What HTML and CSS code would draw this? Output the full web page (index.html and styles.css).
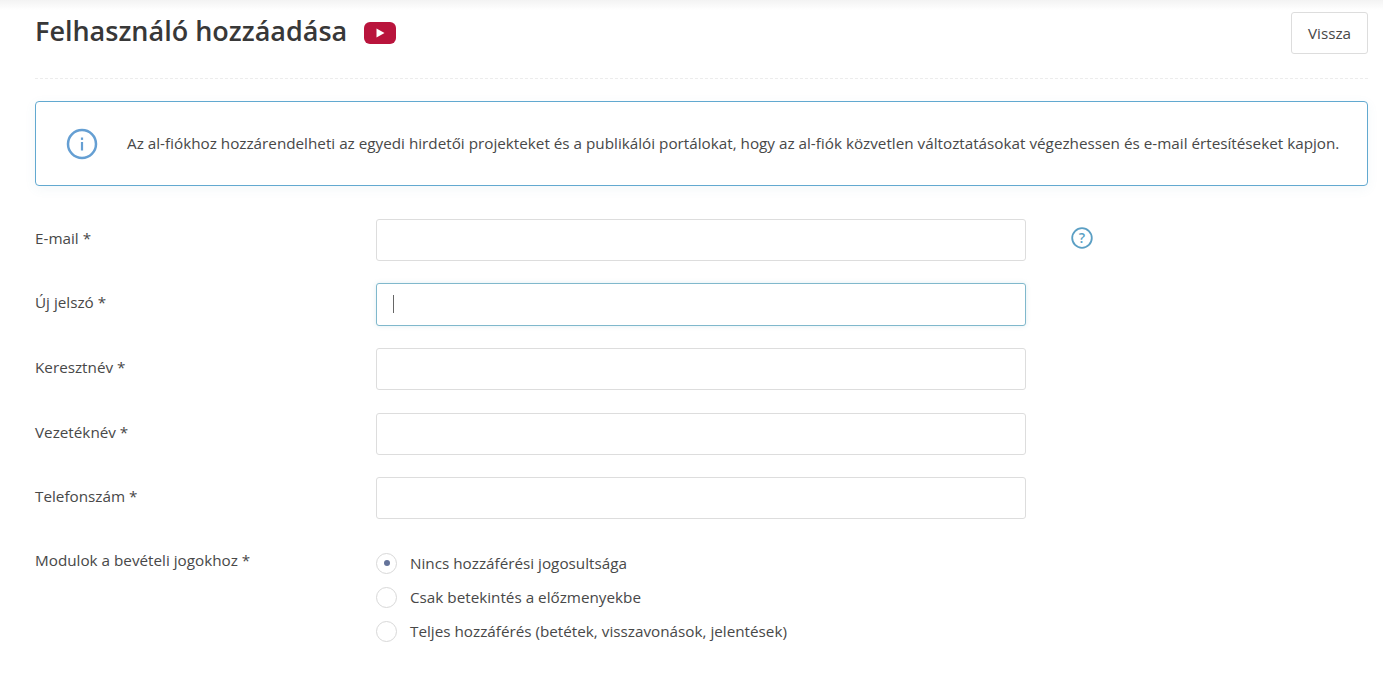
FILE: index.html
```html
<!DOCTYPE html>
<html lang="en">

<head>
    <meta charset="UTF-8" />
    <meta name="viewport" content="width=device-width, initial-scale=1.0" />
    <title>Felhasználó hozzáadása</title>
    <link rel="stylesheet" href="styles.css">
</head>

<body>
    <div class="page">
        <div class="header">
            <div class="title">
                <h1>Felhasználó hozzáadása</h1>
                <svg class="video-icon" width="32" height="22" viewBox="0 0 32 22">
                    <rect width="32" height="22" rx="6" fill="#b9143c" />
                    <path d="M12.5 6.5 L20.5 11 L12.5 15.5 Z" fill="#fff" />
                </svg>
            </div>
            <button class="back">Vissza</button>
        </div>

        <div class="notice">
            <svg class="notice-icon" width="32" height="32" viewBox="0 0 32 32">
                <circle cx="16" cy="16" r="14" fill="none" stroke="#659fd3" stroke-width="2.5" />
                <rect x="14.9" y="14" width="2.2" height="8.5" fill="#659fd3" />
                <rect x="14.9" y="9.5" width="2.2" height="2.4" fill="#659fd3" />
            </svg>
            <p>Az al-fiókhoz hozzárendelheti az egyedi hirdetői projekteket és a publikálói portálokat, hogy az al-fiók közvetlen változtatásokat végezhessen és e-mail értesítéseket kapjon.</p>
        </div>

        <form class="form">
            <div class="row">
                <label>E-mail *</label>
                <input type="text" />
                <svg class="help" width="22" height="22" viewBox="0 0 22 22">
                    <circle cx="11" cy="11" r="9.8" fill="none" stroke="#5b9fc4" stroke-width="1.8" />
                    <text x="11" y="16" text-anchor="middle" class="help-mark">?</text>
                </svg>
            </div>
            <div class="row">
                <label>Új jelszó *</label>
                <div class="input focused"><span class="caret"></span></div>
            </div>
            <div class="row">
                <label>Keresztnév *</label>
                <input type="text" />
            </div>
            <div class="row">
                <label>Vezetéknév *</label>
                <input type="text" />
            </div>
            <div class="row">
                <label>Telefonszám *</label>
                <input type="text" />
            </div>
            <div class="row radios-row">
                <label>Modulok a bevételi jogokhoz *</label>
                <div class="radios">
                    <div class="radio-item"><span class="radio checked"></span>Nincs hozzáférési jogosultsága</div>
                    <div class="radio-item"><span class="radio"></span>Csak betekintés a előzmenyekbe</div>
                    <div class="radio-item"><span class="radio"></span>Teljes hozzáférés (betétek, visszavonások, jelentések)</div>
                </div>
            </div>
        </form>
    </div>
</body>

</html>
```

FILE: styles.css
```css
* {
    box-sizing: border-box;
}

body {
    margin: 0;
    height: 673px;
    overflow: hidden;
    background: #fff;
    color: #484848;
    font-family: "Open Sans", sans-serif;
    font-size: 15.25px;
}

.page {
    padding: 12px 15px 0 35px;
    background: linear-gradient(to bottom, #f3f3f3, #fff 10px);
}

.header {
    display: flex;
    justify-content: space-between;
    align-items: flex-start;
    height: 67px;
    border-bottom: 1px dashed #ececec;
}

.title {
    display: flex;
    align-items: center;
    height: 38px;
}

h1 {
    margin: 0;
    margin-top: -1px;
    font-size: 27px;
    font-weight: 600;
    color: #383838;
}

.video-icon {
    margin-left: 17px;
    margin-top: 3px;
}

.back {
    width: 77px;
    height: 42px;
    border: 1px solid #ddd;
    border-radius: 3px;
    background: #fff;
    color: #484848;
    font-family: inherit;
    font-size: 15.25px;
}

.notice {
    display: flex;
    align-items: center;
    height: 85px;
    margin-top: 22px;
    padding-left: 30px;
    border: 1px solid #62a9d0;
    border-radius: 4px;
    box-shadow: 0 3px 12px rgba(90, 140, 170, 0.07);
}

.notice p {
    margin: -2px 0 0 29px;
    white-space: nowrap;
}

.form {
    margin-top: 32.98px;
}

.row {
    display: flex;
    align-items: center;
    height: 42px;
    margin-bottom: 22.53px;
}

.row label {
    width: 341px;
    margin-top: -4px;
}

input,
.input {
    width: 650px;
    height: 42px;
    border: 1px solid #ddd;
    border-radius: 3px;
    background: #fff;
}

.focused {
    display: flex;
    align-items: center;
    flex-shrink: 0;
    height: 43px;
    padding-left: 16px;
    border-color: #80b8cc;
    box-shadow: 0 0 4px rgba(128, 184, 204, 0.25);
}

.caret {
    width: 1px;
    height: 18px;
    background: #666;
}

.help {
    margin-left: 45px;
    margin-top: -4px;
}

.help-mark {
    font-family: "Open Sans", sans-serif;
    font-size: 14px;
    font-weight: 600;
    fill: #5b9fc4;
}

.radios-row {
    align-items: flex-start;
    height: auto;
    margin: 0;
    padding-top: 8px;
}

.radios-row label {
    margin-top: 0;
}

.radios {
    margin-top: -4px;
}

.radio-item {
    display: flex;
    align-items: center;
    height: 34px;
}

.radio {
    display: flex;
    align-items: center;
    justify-content: center;
    width: 21px;
    height: 21px;
    margin-right: 13px;
    margin-top: 1px;
    border: 1px solid #d8d8d8;
    border-radius: 50%;
}

.checked::after {
    content: "";
    width: 6px;
    height: 6px;
    border-radius: 50%;
    background: #64739a;
}
```
